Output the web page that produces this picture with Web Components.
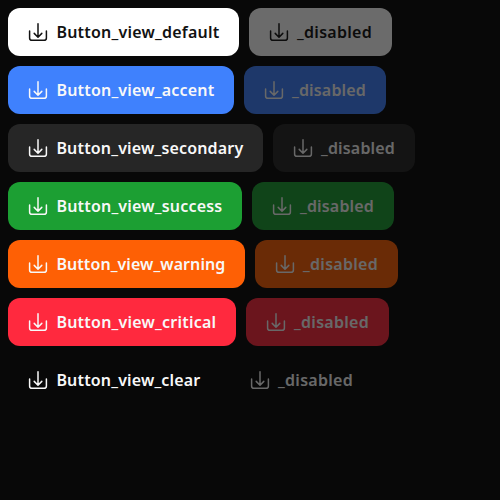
<!DOCTYPE html>
<html lang="en"><head><meta charset="utf-8"><title>Button views</title>
<style>html,body{margin:0;background:#080808}</style></head>
<body>
<button-gallery></button-gallery>
<template id="icon"><style>:host{display:block;width:20px;height:20px;flex:none}svg{display:block}</style>
<svg width="20" height="20" viewBox="0 0 20 20" fill="none" stroke="currentColor" stroke-width="1.5" stroke-linecap="round" stroke-linejoin="round"><path d="M10 1.8V15M6.2 11.4l3.8 3.8 3.8-3.8M1.6 9v6.9q0 2.4 2.4 2.4h12q2.4 0 2.4-2.4V9"/></svg></template>
<template id="button"><style>
:host{display:block;--bg:transparent;--fg:#f8f8f8}
:host([view=default]){--bg:#fff;--fg:#121212}
:host([view=accent]){--bg:#3f81fd}
:host([view=secondary]){--bg:#262626}
:host([view=success]){--bg:#1c9f33}
:host([view=warning]){--bg:#fe6005}
:host([view=critical]){--bg:#ff293e}
:host([disabled]){opacity:.4}
button{display:flex;align-items:center;gap:8px;box-sizing:border-box;height:48px;margin:0;padding:0 20px;border:0;border-radius:12px;background:var(--bg);color:var(--fg);font:600 16px/22px "Noto Sans",sans-serif;white-space:nowrap}
.label{display:block}
.label span{display:inline-block}
:host(:not([disabled])) .label span{margin-left:.4px}
</style><button><download-icon></download-icon><div class="label"><span><slot></slot></span></div></button></template>
<template id="gallery"><style>
:host{display:flex;flex-direction:column;gap:10px;padding:8px}
.row{display:flex;gap:10px}
</style></template>
<script>
const stamp=(host,id)=>{const r=host.attachShadow({mode:'open'});r.append(document.getElementById(id).content.cloneNode(true));return r};
customElements.define('download-icon',class extends HTMLElement{constructor(){super();stamp(this,'icon')}});
customElements.define('ui-button',class extends HTMLElement{
  constructor(){super();stamp(this,'button')}
  connectedCallback(){
    if(this.hasAttribute('disabled'))this.shadowRoot.querySelector('button').disabled=true;
    // Track the label so that it fills its assigned width.
    const box=this.shadowRoot.querySelector('.label'),span=box.firstElementChild;
    const target=parseFloat(this.getAttribute('label-width'));
    const natural=span.getBoundingClientRect().width;
    box.style.width=target+'px';
    span.style.letterSpacing=(target-natural)/this.textContent.length+'px';
  }});
customElements.define('button-gallery',class extends HTMLElement{
  constructor(){super();const r=stamp(this,'gallery');
    for(const [view,w,d] of [['default',163,75],['accent',158,74],['secondary',187,74],['success',166,74],['warning',169,75],['critical',160,75],['clear',144,75]]){
      const row=document.createElement('div');row.className='row';
      row.innerHTML=`<ui-button view="${view}" label-width="${w}">Button_view_${view}</ui-button><ui-button view="${view}" label-width="${d}" disabled>_disabled</ui-button>`;
      r.append(row)}
  }});
</script>
</body></html>
